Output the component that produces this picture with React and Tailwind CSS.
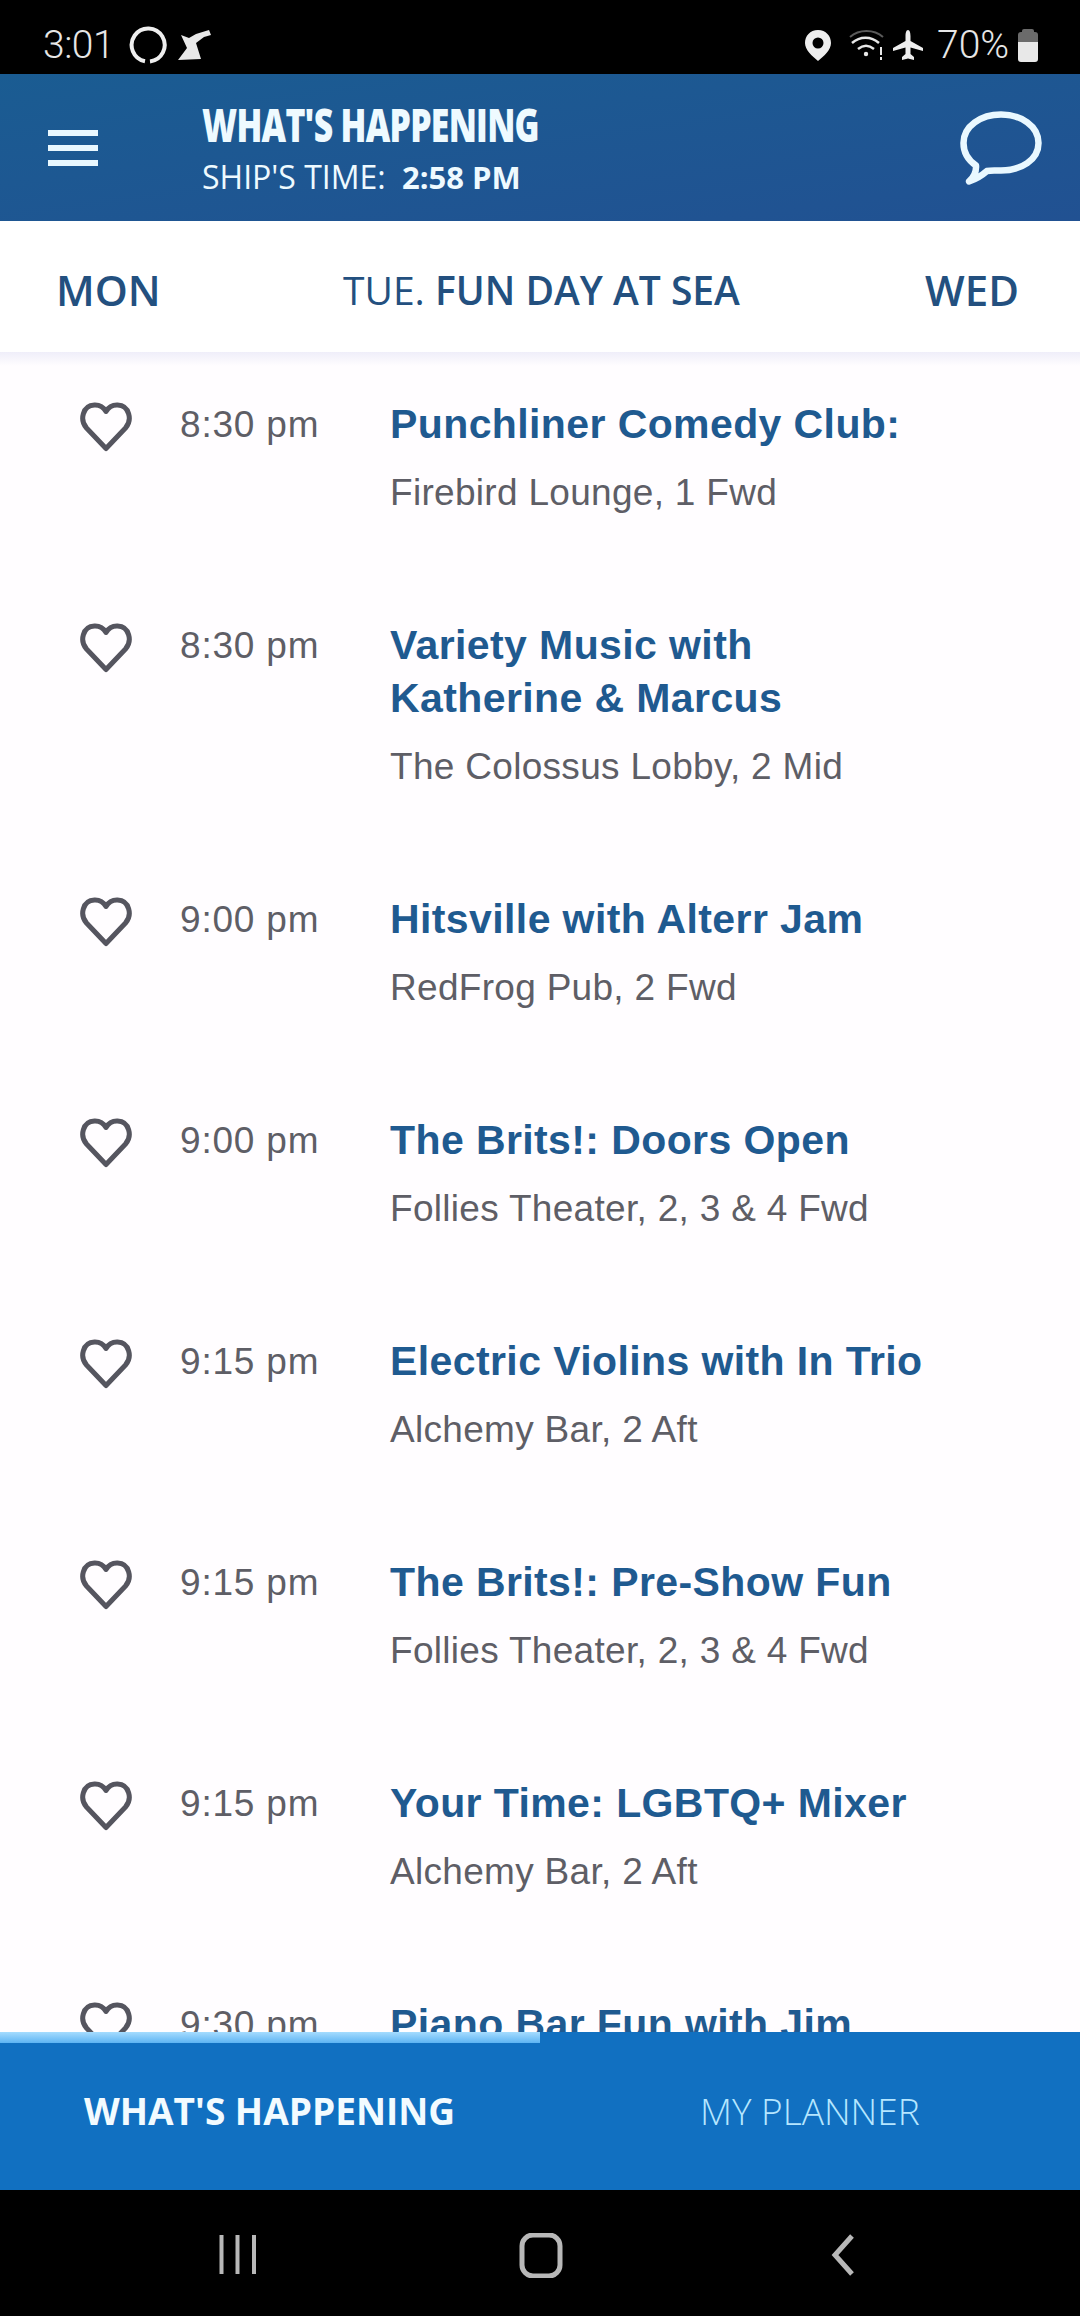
import React from "react";

const rows = [
  { time: "8:30 pm", title: ["Punchliner Comedy Club:"], place: "Firebird Lounge, 1 Fwd" },
  { time: "8:30 pm", title: ["Variety Music with", "Katherine & Marcus"], place: "The Colossus Lobby, 2 Mid" },
  { time: "9:00 pm", title: ["Hitsville with Alterr Jam"], place: "RedFrog Pub, 2 Fwd" },
  { time: "9:00 pm", title: ["The Brits!: Doors Open"], place: "Follies Theater, 2, 3 & 4 Fwd" },
  { time: "9:15 pm", title: ["Electric Violins with In Trio"], place: "Alchemy Bar, 2 Aft" },
  { time: "9:15 pm", title: ["The Brits!: Pre-Show Fun"], place: "Follies Theater, 2, 3 & 4 Fwd" },
  { time: "9:15 pm", title: ["Your Time: LGBTQ+ Mixer"], place: "Alchemy Bar, 2 Aft" },
  { time: "9:30 pm", title: ["Piano Bar Fun with Jim"], place: "" },
];

function Heart() {
  return (
    <svg width="52" height="50" viewBox="0 0 52 50" fill="none" stroke="#55555f" strokeWidth="5" strokeLinejoin="round" className="block">
      <path d="M26 46.5 L6.5 26 C-0.5 18 2.5 3.5 14.5 3 C20 2.8 24 6 26 9.5 C28 6 32 2.8 37.5 3 C49.5 3.5 52.5 18 45.5 26 Z" />
    </svg>
  );
}

function StatusBar() {
  return (
    <div className="flex h-[74px] shrink-0 items-center bg-black pl-[43px] pr-[42px] pt-[16px] text-[#e6e6e6] font-['Roboto',sans-serif]">
      <span className="w-[71px] text-[39px] font-light leading-none tracking-[-0.5px]">3:01</span>
      <svg width="38" height="38" viewBox="0 0 38 38" fill="none" className="ml-[15px]">
        <path d="M16 35.2 A16.5 16.5 0 1 1 21 35.4" stroke="#eeeeee" strokeWidth="4" />
      </svg>
      <svg width="34" height="32" viewBox="0 0 34 32" className="ml-[11px]">
        <path d="M0 31 L9 19 L3 6 L11 9 L18 5 L31 1 L33 6 L26 8 L18 14 L23 30 Z" fill="#e8e8e8" />
      </svg>
      <div className="flex-1" />
      <svg width="26" height="31" viewBox="0 0 26 31">
        <path fillRule="evenodd" d="M13 0 C5 0 0 6 0 13 C0 20 7 26 13 31 C19 26 26 20 26 13 C26 6 21 0 13 0 Z M13 7.5 A5.5 5.5 0 1 1 13 18.5 A5.5 5.5 0 1 1 13 7.5 Z" fill="#eeeeee" />
      </svg>
      <svg width="36" height="30" viewBox="0 0 36 30" fill="none" className="ml-[18px]">
        <path d="M1 7 C10 -1 25 -1 34 7" stroke="#5a5a5a" strokeWidth="2" />
        <path d="M3 13 C11 6 22 6 30 13" stroke="#e8e8e8" strokeWidth="2.5" />
        <path d="M9 19 C14 15 20 15 25 19" stroke="#e8e8e8" strokeWidth="2.5" />
        <circle cx="17" cy="24" r="2.2" fill="#e8e8e8" />
        <path d="M32 17 V25 M32 27 V30" stroke="#e8e8e8" strokeWidth="2" />
      </svg>
      <svg width="30" height="30" viewBox="0 0 30 30" className="ml-[8px]">
        <path d="M15 0 C16.8 0 17.5 3 17.5 6 V11 L30 18 V21 L17.5 17.5 V24 L21 27 V30 L15 28.5 L9 30 V27 L12.5 24 V17.5 L0 21 V18 L12.5 11 V6 C12.5 3 13.2 0 15 0 Z" fill="#eeeeee" />
      </svg>
      <span className="ml-[14px] w-[75px] text-[39px] font-light leading-none">70%</span>
      <div className="ml-[6px] flex h-[33px] w-[20px] flex-col items-center">
        <div className="h-[3px] w-[12px] rounded-t-[2px] bg-[#6b6b6b]" />
        <div className="h-[10px] w-full rounded-t-[3px] bg-[#6b6b6b]" />
        <div className="w-full flex-1 rounded-b-[3px] bg-[#e8e8e8]" />
      </div>
    </div>
  );
}

function Header() {
  return (
    <div className="flex h-[147px] shrink-0 items-center bg-gradient-to-br from-[#1a5c92] to-[#215192] pl-[48px] pr-[38px] text-[#eefaff]">
      <div className="flex w-[50px] flex-col gap-[9px]">
        <div className="h-[6px] bg-[#e9f8ff]" />
        <div className="h-[6px] bg-[#e9f8ff]" />
        <div className="h-[6px] bg-[#e9f8ff]" />
      </div>
      <div className="ml-[104px] flex w-[400px] flex-col font-['Open_Sans',sans-serif]">
        <div className="h-[56px] w-[560px] origin-left scale-x-[0.735] whitespace-nowrap text-[46px] font-extrabold leading-[56px] tracking-[-1px]">WHAT'S HAPPENING</div>
        <div className="mt-[3px] flex h-[44px] items-center whitespace-nowrap text-[31px] leading-[44px]">
          <span className="w-[200px] text-[32px]">SHIP'S TIME:</span>
          <span className="font-bold">2:58 PM</span>
        </div>
      </div>
      <div className="flex-1" />
      <svg width="82" height="74" viewBox="0 0 82 74" fill="none">
        <path d="M41 3.5 C61 3.5 78.5 15 78.5 32 C78.5 49 61 59.5 41 59.5 C35 59.5 31 59 27 60 C23 63.5 16 68 9 70.5 C14 66 16.5 61 16 54.5 C8 49 3.5 41 3.5 32 C3.5 15 21 3.5 41 3.5 Z" stroke="#e9f8ff" strokeWidth="6.5" strokeLinejoin="round" />
      </svg>
    </div>
  );
}

function DayNav() {
  return (
    <div className="flex h-[131px] shrink-0 items-center bg-white pl-[56px] pr-[61px] pt-[6px] font-['Open_Sans',sans-serif] text-[42px] leading-none text-[#23507f]">
      <span className="w-[287px] font-semibold">MON</span>
      <span className="whitespace-nowrap text-[39px]"><span className="font-normal">TUE.</span> <span className="font-semibold">FUN DAY AT SEA</span></span>
      <div className="flex-1" />
      <span className="font-semibold">WED</span>
    </div>
  );
}

function Row({ r }) {
  return (
    <div className="flex pb-[100px] pl-[80px] font-['Liberation_Sans',sans-serif]">
      <div className="w-[100px] shrink-0 pt-[4px]"><Heart /></div>
      <div className="h-[53px] w-[210px] shrink-0 text-[37px] leading-[53px] tracking-[0.8px] text-[#5e5e66]">{r.time}</div>
      <div className="min-w-0 flex-1">
        <div className="text-[41px] font-bold leading-[53px] tracking-[0.4px] text-[#1f5a90]">
          {r.title.map((t) => <div key={t} className="whitespace-nowrap">{t}</div>)}
        </div>
        <div className="mt-[15px] h-[53px] text-[37px] leading-[53px] tracking-[0.3px] text-[#5e5e66]">{r.place}</div>
      </div>
    </div>
  );
}

function TabBar() {
  return (
    <div className="h-[158px] shrink-0 bg-[#1170c1] font-['Open_Sans',sans-serif]">
      <div className="h-[11px] w-1/2 bg-gradient-to-b from-[#a5dcff] to-[#5db4f2]" />
      <div className="flex h-[147px] items-center pb-[12px] pl-[84px]">
        <span className="w-[616px] whitespace-nowrap text-[37px] font-bold text-[#f2fbff]">WHAT'S HAPPENING</span>
        <span className="whitespace-nowrap text-[37px] font-light text-[#b5e6ff]">MY PLANNER</span>
      </div>
    </div>
  );
}

function NavBar() {
  return (
    <div className="flex h-[126px] shrink-0 items-start bg-black pt-[43px]">
      <svg width="1080" height="45" viewBox="0 0 1080 45" fill="none" stroke="#b8b8b8" className="block">
        <path d="M221.5 2 V41 M237.5 2 V41 M254 2 V41" strokeWidth="4" />
        <rect x="522" y="2" width="38" height="41" rx="11" strokeWidth="5" />
        <path d="M852 3 L835 22 L852 41" strokeWidth="5" />
      </svg>
    </div>
  );
}

export default function App() {
  return (
    <div className="flex h-[2316px] w-[1080px] flex-col overflow-hidden bg-white">
      <StatusBar />
      <Header />
      <DayNav />
      <div className="min-h-0 flex-1 overflow-hidden bg-[#fffdff]">
        <div className="h-[14px] bg-gradient-to-b from-[#efeef9] to-[#fffdff]" />
        <div className="pt-[32px]">
          {rows.map((r, i) => <Row key={i} r={r} />)}
        </div>
      </div>
      <TabBar />
      <NavBar />
    </div>
  );
}
